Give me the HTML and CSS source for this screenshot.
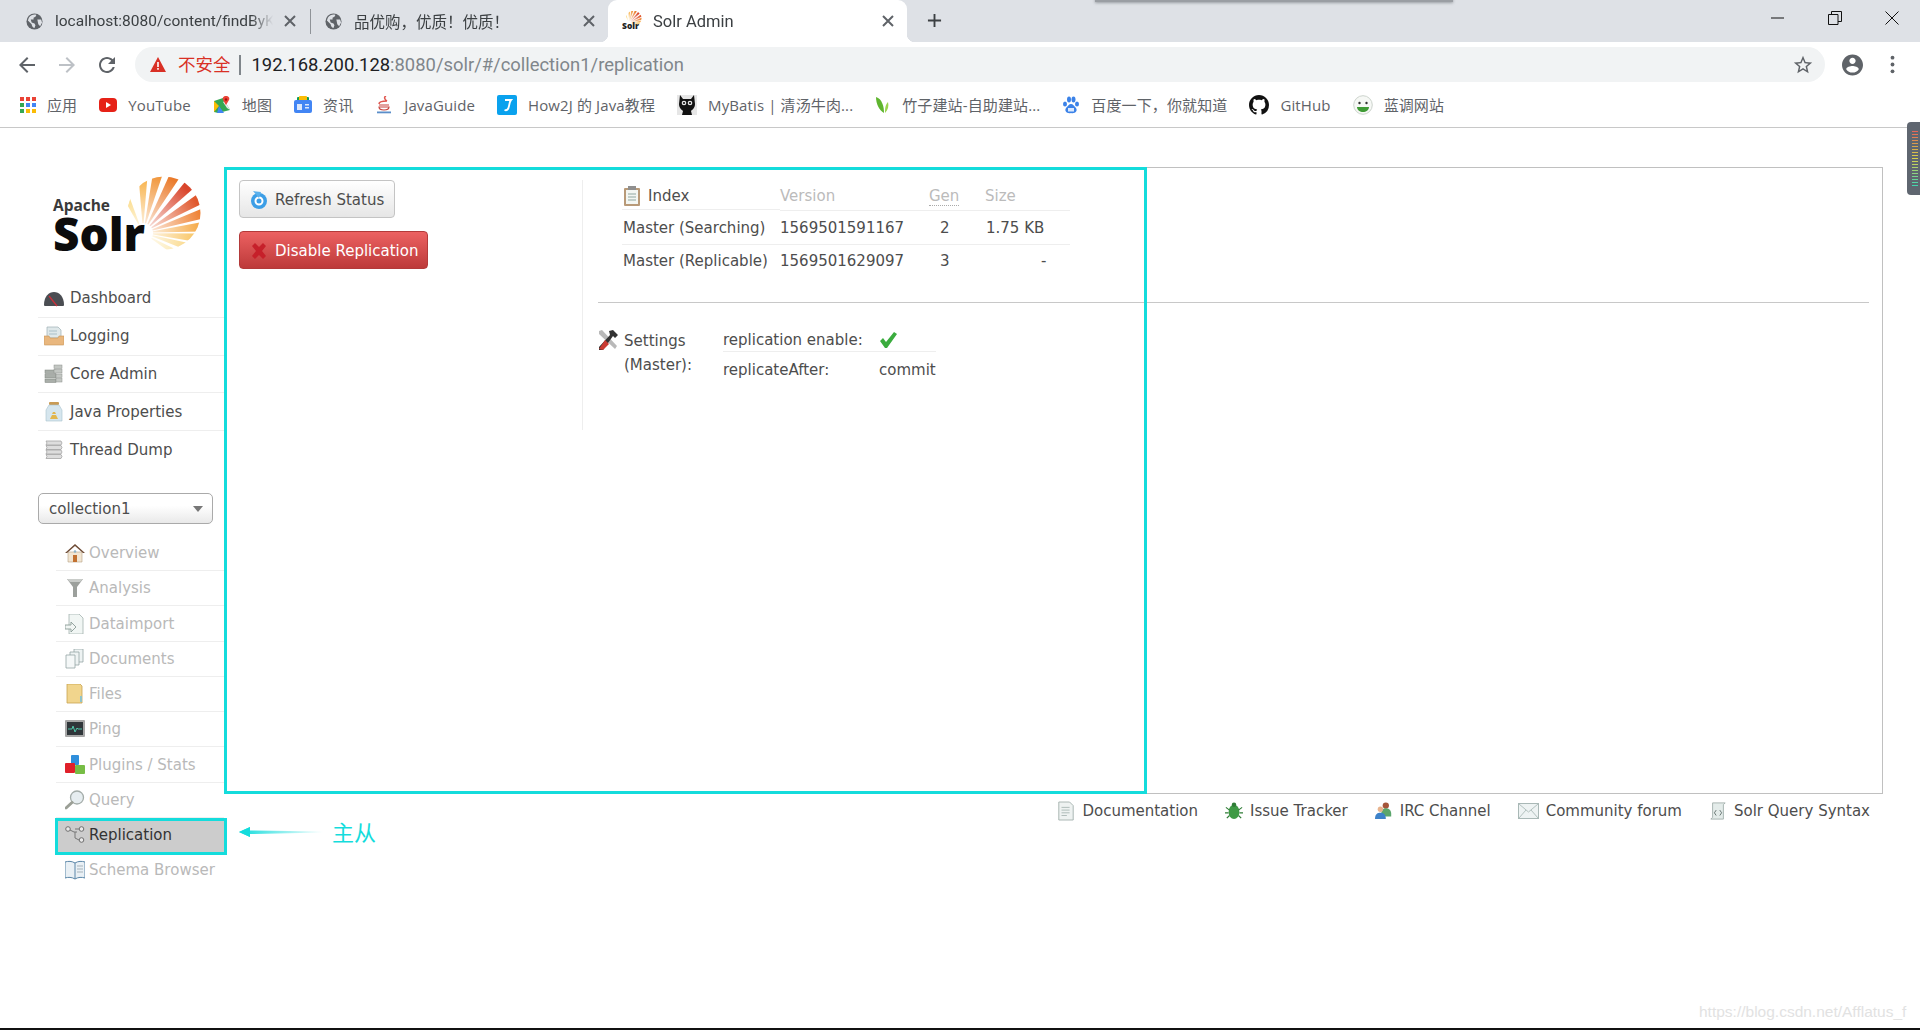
FILE: index.html
```html
<!DOCTYPE html>
<html lang="en">
<head>
<meta charset="utf-8">
<title>Solr Admin</title>
<link rel="stylesheet" href="styles.css">
</head>
<body>
<svg class="sprite" aria-hidden="true">
  <defs>
    <clipPath id="sunclip"><circle cx="21" cy="-20" r="36.5"/></clipPath>
    <radialGradient id="sunfade" gradientUnits="userSpaceOnUse" cx="0" cy="0" r="62">
      <stop offset="0.1" stop-color="#fff" stop-opacity=".85"/>
      <stop offset="1" stop-color="#fff" stop-opacity="0"/>
    </radialGradient>
    <polygon id="ray" points="10,-.6 10,.6 75,6 75,-6"/>
    <linearGradient id="tail" x1="0" x2="1" y1="0" y2="0">
      <stop offset="0" stop-color="#14dcdc"/>
      <stop offset="1" stop-color="#14dcdc" stop-opacity="0"/>
    </linearGradient>
    <symbol id="sun" viewBox="-20 -60 80 80" overflow="visible">
      <g clip-path="url(#sunclip)">
        <use href="#ray" transform="rotate(-115)" fill="#f9c84a"/>
        <use href="#ray" transform="rotate(-90)" fill="#f7a935"/>
        <use href="#ray" transform="rotate(-76)" fill="#f09030"/>
        <use href="#ray" transform="rotate(-61)" fill="#ea7a2a"/>
        <use href="#ray" transform="rotate(-46)" fill="#d9452b"/>
        <use href="#ray" transform="rotate(-31)" fill="#e0572c"/>
        <use href="#ray" transform="rotate(-18)" fill="#ee7f30"/>
        <use href="#ray" transform="rotate(-6)" fill="#f5a43a"/>
        <use href="#ray" transform="rotate(5)" fill="#f8bd4e"/>
        <use href="#ray" transform="rotate(17)" fill="#f9cf6c"/>
        <use href="#ray" transform="rotate(31)" fill="#fbdf8e"/>
        <circle cx="0" cy="0" r="62" fill="url(#sunfade)"/>
      </g>
    </symbol>
    <symbol id="globe" viewBox="0 0 18 18">
      <circle cx="9" cy="9" r="8.5" fill="#5f6368"/>
      <path d="M3 5c2-3 6-4 8-3l-1 2-2 1 0 2-3 0 1 3 3 1 1 2-1 3c-2 0-3-3-3-4L2 8z M12 7l4 0 1 3-2 4-2-2z" fill="#dee1e6"/>
    </symbol>
    <symbol id="x" viewBox="0 0 14 14">
      <path d="M2 2l10 10M12 2L2 12" stroke="#5f6368" stroke-width="2" fill="none"/>
    </symbol>
  </defs>
</svg>

<header class="chrome">
  <div class="tabstrip">
    <div class="tab tab-one">
      <svg class="favicon"><use href="#globe"/></svg>
      <span class="tab-title">localhost:8080/content/findByKey</span>
      <svg class="tab-close"><use href="#x"/></svg>
    </div>
    <span class="tab-sep"></span>
    <div class="tab tab-two">
      <svg class="favicon"><use href="#globe"/></svg>
      <span class="tab-title">品优购，优质！优质！</span>
      <svg class="tab-close"><use href="#x"/></svg>
    </div>
    <div class="tab tab-active">
      <svg class="favicon solr-fav" viewBox="0 0 20 20">
        <use href="#sun" x="3" y="-1" width="17" height="17"/>
        <text x="0" y="18" class="fav-text">Solr</text>
      </svg>
      <span class="tab-title">Solr Admin</span>
      <svg class="tab-close"><use href="#x"/></svg>
    </div>
    <svg class="new-tab" viewBox="0 0 16 16"><path d="M8 1v14M1 8h14" stroke="#3c4043" stroke-width="2"/></svg>
    <div class="window-controls">
      <span class="win-btn"><svg viewBox="0 0 14 14"><path d="M0 7h13" stroke="#111" stroke-width="1"/></svg></span>
      <span class="win-btn"><svg viewBox="0 0 14 14"><path d="M.5 3.500h9.500v10h-9.500zM3.500 3V.5h10v10h-3.500" stroke="#111" stroke-width="1" fill="none"/></svg></span>
      <span class="win-btn"><svg viewBox="0 0 14 14"><path d="M.5.5l13 13M13.500.5l-13 13" stroke="#111" stroke-width="1" fill="none"/></svg></span>
    </div>
  </div>

  <div class="toolbar">
    <span class="nav-btn"><svg viewBox="0 0 24 24"><path fill="#5f6368" d="M20 11H7.830l5.590-5.590L12 4l-8 8 8 8 1.410-1.410L7.830 13H20v-2z"/></svg></span>
    <span class="nav-btn"><svg viewBox="0 0 24 24"><path fill="#bdc1c6" d="M12 4l-1.410 1.410L16.170 11H4v2h12.170l-5.580 5.590L12 20l8-8z"/></svg></span>
    <span class="nav-btn"><svg viewBox="0 0 24 24"><path fill="#5f6368" d="M17.650 6.350C16.200 4.900 14.210 4 12 4c-4.420 0-7.990 3.580-7.990 8s3.570 8 7.990 8c3.730 0 6.840-2.550 7.730-6h-2.080c-.82 2.330-3.040 4-5.650 4-3.310 0-6-2.690-6-6s2.690-6 6-6c1.660 0 3.140.69 4.220 1.780L13 11h7V4l-2.350 2.350z"/></svg></span>
    <div class="omnibox">
      <svg class="warn" viewBox="0 0 16 15"><path fill="#d93025" d="M8 0l8 15H0z"/><path fill="#fff" d="M7.200 5h1.600v5H7.200zM7.200 11h1.600v1.700H7.200z"/></svg>
      <span class="insecure">不安全</span>
      <span class="omni-sep"></span>
      <span class="url"><span class="host">192.168.200.128</span>:8080/solr/#/collection1/replication</span>
      <svg class="star" viewBox="0 0 24 24"><path fill="#5f6368" d="M22 9.240l-7.190-.62L12 2 9.190 8.630 2 9.240l5.460 4.730L5.820 21 12 17.270 18.180 21l-1.630-7.030L22 9.240zM12 15.400l-3.760 2.270 1-4.280-3.320-2.880 4.380-.38L12 6.100l1.710 4.040 4.380.38-3.320 2.880 1 4.280L12 15.400z"/></svg>
    </div>
    <svg class="avatar" viewBox="2 2 20 20"><path fill="#5f6368" d="M12 2C6.480 2 2 6.480 2 12s4.480 10 10 10 10-4.480 10-10S17.520 2 12 2zm0 3c1.660 0 3 1.340 3 3s-1.340 3-3 3-3-1.340-3-3 1.340-3 3-3zm0 14.200c-2.500 0-4.710-1.280-6-3.220.03-1.990 4-3.080 6-3.080 1.990 0 5.970 1.090 6 3.080-1.290 1.940-3.500 3.220-6 3.220z"/></svg>
    <svg class="menu-dots" viewBox="0 0 4 18"><circle cx="2" cy="2.500" r="1.800" fill="#5f6368"/><circle cx="2" cy="9" r="1.800" fill="#5f6368"/><circle cx="2" cy="15.500" r="1.800" fill="#5f6368"/></svg>
  </div>

  <nav class="bookmarks">
    <a class="bm">
      <svg class="bm-ico" viewBox="0 0 16 16"><g>
        <rect x="0" y="0" width="4" height="4" fill="#ea4335"/><rect x="6" y="0" width="4" height="4" fill="#ea4335"/><rect x="12" y="0" width="4" height="4" fill="#ea4335"/>
        <rect x="0" y="6" width="4" height="4" fill="#34a853"/><rect x="6" y="6" width="4" height="4" fill="#4285f4"/><rect x="12" y="6" width="4" height="4" fill="#4285f4"/>
        <rect x="0" y="12" width="4" height="4" fill="#34a853"/><rect x="6" y="12" width="4" height="4" fill="#fbbc05"/><rect x="12" y="12" width="4" height="4" fill="#fbbc05"/></g></svg>
      应用</a>
    <a class="bm">
      <svg class="bm-ico" viewBox="0 0 18 18"><rect x="0" y="2" width="18" height="14" rx="4" fill="#e62117"/><path d="M7 6l5 3-5 3z" fill="#fff"/></svg>
      YouTube</a>
    <a class="bm">
      <svg class="bm-ico" viewBox="0 0 18 18"><path d="M1 5l9-3 7 12-12 3-4-1z" fill="#34a853"/><path d="M1 5l5 5-5 6z" fill="#fbbc05"/><path d="M6 10l5 7H4z" fill="#4285f4"/><path d="M10 6l4 6 3 2-5-9z" fill="#e8eaed"/><path d="M13 0c-2.500 0-4 2-3 4l3 5 3-5c1-2-.5-4-3-4z" fill="#ea4335"/><circle cx="13" cy="3.500" r="1.200" fill="#a50e0e"/></svg>
      地图</a>
    <a class="bm">
      <svg class="bm-ico" viewBox="0 0 18 18"><rect x="3" y="1" width="12" height="6" rx="1" fill="#0f9d58"/><rect x="5" y="0" width="8" height="5" rx="1" fill="#fbbc05"/><rect x="0" y="4" width="18" height="13" rx="2" fill="#4285f4"/><path d="M3 8h5v6H3z M11 8h4v1.500h-4z M11 11h4v1.500h-4z" fill="#dbe7fb"/></svg>
      资讯</a>
    <a class="bm">
      <svg class="bm-ico" viewBox="0 0 18 18"><path d="M4 8c0-3 5-3 8-3M12 5C9 3 9 1 11 0" stroke="#e0574f" stroke-width="1.500" fill="none"/><path d="M4 9h10M4 11h10c0 2-2 3-5 3s-5-1-5-3z" stroke="#c7453f" stroke-width="1.200" fill="none"/><rect x="2" y="15.500" width="14" height="1.800" fill="#5b8ec9"/></svg>
      JavaGuide</a>
    <a class="bm">
      <svg class="bm-ico bm-wide" viewBox="0 0 20 20"><rect width="20" height="20" rx="2" fill="#0aa2ee"/><path d="M8 5h6c-1 1-1.500 3-2 6s-2 5-4.500 4" stroke="#fff" stroke-width="1.800" fill="none"/></svg>
      How2J 的 Java教程</a>
    <a class="bm">
      <svg class="bm-ico bm-wide" viewBox="0 0 20 20"><rect width="20" height="20" fill="#e6e6e6"/><path d="M3 0l3 4h8l3-4 1 9c0 4-3 6-4 7l1 4H5l1-4c-1-1-4-3-4-7z" fill="#111"/><circle cx="7" cy="8" r="2.300" fill="#e8e8e8"/><circle cx="13" cy="8" r="2.300" fill="#e8e8e8"/><circle cx="7" cy="8" r="1.100" fill="#111"/><circle cx="13" cy="8" r="1.100" fill="#111"/></svg>
      MyBatis | 清汤牛肉...</a>
    <a class="bm">
      <svg class="bm-ico bm-bamboo" viewBox="0 0 16 18"><path d="M1 1c6 2 8 9 8 16C4 14 1 8 1 1z" fill="#5fb52f"/><path d="M10 17c0-4 0-8 3-11 1 4 0 8-3 11z" fill="#9ad44e"/></svg>
      竹子建站-自助建站...</a>
    <a class="bm">
      <svg class="bm-ico" viewBox="0 0 18 18"><g fill="#3b82e8"><ellipse cx="3" cy="8" rx="2" ry="2.600"/><ellipse cx="7" cy="3.500" rx="2" ry="3"/><ellipse cx="11.500" cy="3.500" rx="2" ry="3"/><ellipse cx="15" cy="8" rx="2" ry="2.600"/><path d="M9 8c-2 0-3 2-5 4-2 3 1 6 5 5 4 1 7-2 5-5-2-2-3-4-5-4z"/></g><rect x="6" y="12" width="6" height="3.500" fill="#dbe9fd"/></svg>
      百度一下，你就知道</a>
    <a class="bm">
      <svg class="bm-ico bm-wide" viewBox="0 0 16 16"><path fill="#111" d="M8 0C3.580 0 0 3.580 0 8c0 3.540 2.290 6.530 5.470 7.590.4.070.55-.17.55-.38 0-.19-.01-.82-.01-1.490-2.010.37-2.530-.49-2.690-.94-.09-.23-.48-.94-.82-1.130-.28-.15-.68-.52-.01-.53.63-.01 1.080.58 1.230.82.72 1.210 1.870.87 2.330.66.07-.52.28-.87.51-1.070-1.780-.2-3.640-.89-3.640-3.950 0-.87.31-1.590.82-2.150-.08-.2-.36-1.020.08-2.120 0 0 .67-.21 2.200.82.64-.18 1.320-.27 2-.27.68 0 1.360.09 2 .27 1.530-1.040 2.200-.82 2.200-.82.44 1.100.16 1.920.08 2.120.51.56.82 1.270.82 2.150 0 3.070-1.870 3.750-3.650 3.950.29.25.54.73.54 1.480 0 1.070-.01 1.930-.01 2.200 0 .21.15.46.55.38A8.013 8.013 0 0016 8c0-4.420-3.580-8-8-8z"/></svg>
      GitHub</a>
    <a class="bm">
      <svg class="bm-ico bm-wide" viewBox="0 0 20 20"><circle cx="10" cy="10" r="9.300" fill="#f6f8f5" stroke="#ccd3cc"/><circle cx="6.500" cy="8" r="1.200" fill="#333"/><circle cx="13.500" cy="8" r="1.200" fill="#333"/><path d="M4 12h12c0 3-3 5-6 5s-6-2-6-5z" fill="#3f9b35"/></svg>
      蓝调网站</a>
  </nav>
</header>

<main class="page">
  <aside class="sidebar">
    <svg class="logo" viewBox="0 0 155 90">
      <use href="#sun" x="73" y="3" width="80" height="80"/>
      <text x="3" y="41" class="logo-apache" textLength="57" lengthAdjust="spacingAndGlyphs">Apache</text>
      <text x="3" y="81" class="logo-solr" textLength="92" lengthAdjust="spacingAndGlyphs">Solr</text>
    </svg>

    <ul class="menu">
      <li class="menu-row"><svg class="ico" viewBox="0 0 20 20"><path d="M0 17C0 8 5 4 10 4s10 4 10 13c0 1-1 1-2 1H2c-1 0-2 0-2-1z" fill="#4a4d52"/><path d="M5 8l8 10" stroke="#c9303a" stroke-width="1.300"/></svg>Dashboard</li>
      <li class="menu-row"><svg class="ico" viewBox="0 0 20 20"><path d="M3 1h11l3 3v8H3z" fill="#dfe8ea" stroke="#9eb0b4" stroke-width=".7"/><path d="M5 5h8M5 8h8" stroke="#a9c0c8"/><path d="M0 10h5l1 2h8l1-2h5v8c0 1-1 1-1 1H1s-1 0-1-1z" fill="#e9b77e" stroke="#c79557" stroke-width=".6"/></svg>Logging</li>
      <li class="menu-row"><svg class="ico" viewBox="0 0 20 20"><g fill="#a9aea9" stroke="#7d827d" stroke-width=".5"><rect x="1" y="6" width="11" height="3.500"/><rect x="1" y="10.500" width="11" height="3.500"/><rect x="1" y="15" width="11" height="3.500"/></g><g fill="#c3c7c3" stroke="#8c908c" stroke-width=".5"><rect x="10" y="1" width="8" height="3.500"/><rect x="10" y="5.500" width="8" height="3.500"/><rect x="12" y="10" width="6" height="3.500"/><rect x="12" y="14.500" width="6" height="3.500"/></g></svg>Core Admin</li>
      <li class="menu-row"><svg class="ico" viewBox="0 0 20 20"><rect x="5" y="0" width="10" height="3" rx="1" fill="#c99b55"/><path d="M5 3h10l3 5v11H2V8z" fill="#d6e6ee" stroke="#a9c3cf" stroke-width=".6"/><path d="M6 17l2-4h4l2 4zM8 12l1-2h2l1 2z" fill="#e2b64d"/></svg>Java Properties</li>
      <li class="menu-row"><svg class="ico" viewBox="0 0 20 20"><g fill="#dddddd" stroke="#a4a4a4" stroke-width=".8"><path d="M2 1h15l1 2-1 2H2l1-2z"/><path d="M2 5.500h15l1 2-1 2H2l1-2z"/><path d="M2 10h15l1 2-1 2H2l1-2z"/><path d="M2 14.500h15l1 2-1 2H2l1-2z"/></g></svg>Thread Dump</li>
    </ul>

    <div class="core-select"><span>collection1</span><i class="caret"></i></div>

    <ul class="menu core-menu">
      <li class="menu-row core-row"><svg class="ico" viewBox="0 0 20 20"><path d="M3 9h14v10H3z" fill="#f2e6d3" stroke="#b6a184" stroke-width=".6"/><path d="M0 10L10 1l10 9-2 0-8-7-8 7z" fill="#6e4b35"/><rect x="8" y="12" width="4" height="7" fill="#c2702f"/><circle cx="10" cy="8.500" r="1.300" fill="#8fb4c8"/></svg>Overview</li>
      <li class="menu-row core-row"><svg class="ico" viewBox="0 0 20 20"><path d="M2 1h16l-6 8v10H8V9z" fill="#9ca09c"/><path d="M2 1h16l-3 3H5z" fill="#c9ccc9"/></svg>Analysis</li>
      <li class="menu-row core-row"><svg class="ico" viewBox="0 0 20 20"><path d="M4 0h10l4 4v16H4z" fill="#f1f6f4" stroke="#a3b3ae" stroke-width=".8"/><path d="M0 11h6V8l5 5-5 5v-3H0z" fill="#f2f6f4" stroke="#8a9c96" stroke-width=".9"/></svg>Dataimport</li>
      <li class="menu-row core-row"><svg class="ico" viewBox="0 0 20 20"><path d="M9 0h9v13H9z" fill="#eef3f3" stroke="#95a5a5" stroke-width=".8"/><path d="M5 3h9v13H5z" fill="#eef3f3" stroke="#95a5a5" stroke-width=".8"/><path d="M1 6h9v13H1z" fill="#f5f8f8" stroke="#95a5a5" stroke-width=".8"/></svg>Documents</li>
      <li class="menu-row core-row"><svg class="ico" viewBox="0 0 20 20"><path d="M2 0h13l2 2v17H2z" fill="#f1d58d" stroke="#c9a351" stroke-width=".8"/><path d="M15 12h2v6h-2z" fill="#8fc3c9"/></svg>Files</li>
      <li class="menu-row core-row"><svg class="ico" viewBox="0 0 20 20"><rect x="0" y="1" width="20" height="17" rx="1" fill="#a7a7a7"/><rect x="2" y="3" width="16" height="13" fill="#30363a"/><path d="M3 10h4l1-3 2 6 2-4 1 1h4" stroke="#4fc4a8" fill="none"/></svg>Ping</li>
      <li class="menu-row core-row"><svg class="ico" viewBox="0 0 20 20"><rect x="6" y="0" width="8" height="10" rx="1" fill="#2f8fdc"/><rect x="0" y="8" width="10" height="10" rx="1" fill="#e0202a"/><rect x="10" y="10" width="10" height="9" rx="1" fill="#77bd45"/></svg>Plugins / Stats</li>
      <li class="menu-row core-row"><svg class="ico" viewBox="0 0 20 20"><circle cx="12" cy="7.500" r="6.500" fill="#e6edf0" stroke="#a3aca9" stroke-width="1.300"/><path d="M7 12.500L1 18" stroke="#9b9f96" stroke-width="3" stroke-linecap="round"/></svg>Query</li>
      <li class="menu-row core-row core-active"><svg class="ico" viewBox="0 0 20 20"><g fill="#e9e9e9" stroke="#6f6f6f"><circle cx="3" cy="4" r="2.300"/><circle cx="16.500" cy="4" r="2.300"/><circle cx="16.500" cy="15" r="2.300"/></g><path d="M5 5l4 2h3M10 7v6l4 2M14 4h-4" stroke="#777" fill="none"/></svg>Replication</li>
      <li class="menu-row core-row core-last"><svg class="ico" viewBox="0 0 20 20"><path d="M0 2c3-1 7-1 10 1 3-2 7-2 10-1v16c-3-1-7-1-10 1-3-2-7-2-10-1z" fill="#e9f0f5" stroke="#5a86a8"/><path d="M10 3v16" stroke="#5a86a8"/><path d="M12 6h6M12 9h6M12 12h6" stroke="#a7b3ba"/></svg>Schema Browser</li>
    </ul>
  </aside>

  <section class="main-col">
    <div class="content">
      <div class="actions">
        <button class="btn btn-plain"><svg class="btn-ico" viewBox="0 0 18 18"><circle cx="9" cy="10" r="8" fill="#3c9ee6"/><circle cx="9" cy="10" r="3.500" fill="none" stroke="#fff" stroke-width="2"/><path d="M3 0l8 1-2 6z" fill="#5ab0ec"/></svg>Refresh Status</button>
        <button class="btn btn-danger"><svg class="btn-ico" viewBox="0 0 18 18"><path d="M2 4l3-3 4 4 4-4 3 3-4 5 4 5-3 3-4-4-4 4-3-3 4-5z" fill="#c6202a"/></svg>Disable Replication</button>
      </div>
      <div class="details">
        <table class="index-table">
          <colgroup><col class="c-name"><col class="c-ver"><col class="c-gen"><col class="c-size"></colgroup>
          <thead>
            <tr>
              <th class="th-index"><svg class="ico" viewBox="0 0 20 20"><rect x="2" y="2" width="16" height="18" rx="1" fill="#b89a78"/><rect x="4" y="4" width="12" height="14" fill="#f3f6f2"/><rect x="6" y="0" width="8" height="4" fill="#8f8f8f"/><path d="M6 8h8M6 11h8M6 14h8" stroke="#8fa7a0"/></svg>Index</th>
              <th>Version</th>
              <th><abbr class="gen">Gen</abbr></th>
              <th>Size</th>
            </tr>
          </thead>
          <tbody>
            <tr class="row-first"><td class="td-name">Master (Searching)</td><td>1569501591167</td><td class="td-gen">2</td><td class="td-size">1.75 KB</td></tr>
            <tr><td class="td-name">Master (Replicable)</td><td>1569501629097</td><td class="td-gen">3</td><td class="td-size td-dash">-</td></tr>
          </tbody>
        </table>
        <hr class="rule">
        <div class="settings">
          <svg class="tool-ico" viewBox="0 0 20 20"><path d="M1 1l3-1 15 16-2 3L1 4z" fill="#b9b9b9"/><path d="M11 1l4-1 5 5-3 3-2-2-10 14H1v-3L12 5z" fill="#333"/><path d="M1 19l6-9 4 4-6 6z" fill="#c93a32"/></svg>
          <div class="settings-label">Settings (Master):</div>
          <div class="settings-list">
            <div class="set-row set-first"><span class="set-key">replication enable:</span><svg class="check" viewBox="0 0 18 18"><path d="M1 10l3-3 3 4 8-10 3 2-10 14h-2z" fill="#3aac3e"/></svg></div>
            <div class="set-row"><span class="set-key">replicateAfter:</span><span>commit</span></div>
          </div>
        </div>
      </div>
    </div>
    <footer class="links">
      <a class="link"><svg class="ico" viewBox="0 0 20 20"><path d="M2 0h12l4 4v16H2z" fill="#eef2f1" stroke="#a3b0ad"/><path d="M5 6h9M5 9h9M5 12h9M5 15h6" stroke="#a9b7b4"/></svg>Documentation</a>
      <a class="link"><svg class="ico" viewBox="0 0 20 20"><ellipse cx="10" cy="11" rx="6" ry="8" fill="#3f9a45"/><circle cx="10" cy="3" r="2.500" fill="#2f7c36"/><path d="M1 6l4 3M19 6l-4 3M0 12h4M20 12h-4M2 18l3-3M18 18l-3-3" stroke="#2f7c36" stroke-width="1.300"/></svg>Issue Tracker</a>
      <a class="link"><svg class="ico" viewBox="0 0 20 20"><circle cx="12" cy="4" r="3.500" fill="#a5553a"/><path d="M7 13c0-5 3-6 5-6s6 1 6 6v3H7z" fill="#5ba66c"/><circle cx="6" cy="8" r="3" fill="#e8b48e"/><path d="M0 19c0-6 3-7 6-7s6 1 6 7z" fill="#3d82c9"/></svg>IRC Channel</a>
      <a class="link"><svg class="ico mail" viewBox="0 0 21 18"><rect x=".5" y="1.500" width="20" height="15" fill="#eef3f3" stroke="#a9b8b6"/><path d="M1 2l9.500 8L20 2M1 16l7-8M20 16l-7-8" stroke="#b3c1bf" fill="none"/></svg>Community forum</a>
      <a class="link"><svg class="ico" viewBox="0 0 20 20"><path d="M4 1h14l-2 2v16H2l2-2z" fill="#e4ecea" stroke="#a1afac"/><path d="M8 9l-2 3 2 3M12 9l2 3-2 3" stroke="#5f6c6a" fill="none"/></svg>Solr Query Syntax</a>
    </footer>
  </section>
</main>

<div class="annot-box"></div>
<svg class="annot-arrow" viewBox="0 0 84 12"><path d="M0 6l11-5v3.500L84 5.500v1L11 8v3z" fill="url(#tail)"/><path d="M0 6l11-5v10z" fill="#14dcdc"/></svg>
<span class="annot-text">主从</span>
<span class="top-shadow"></span>
<div class="side-widget"><i></i></div>
<span class="watermark">https://blog.csdn.net/Afflatus_f</span>
</body>
</html>
```
FILE: styles.css
```css
* { box-sizing: border-box; }
html, body { margin: 0; padding: 0; }
body {
  position: relative;
  width: 1920px;
  height: 1030px;
  overflow: hidden;
  background: #fff;
  color: #4d4d4d;
  font-family: "DejaVu Sans", Verdana, sans-serif;
  font-size: 15px;
  border-bottom: 2px solid #111;
}
.sprite { position: absolute; width: 0; height: 0; }

/* browser chrome */
.chrome { font-family: "Roboto", "Noto Sans CJK SC", sans-serif; }
.tabstrip { display: flex; height: 42px; background: #dee1e6; align-items: stretch; }
.tab { display: flex; align-items: center; font-size: 15.5px; color: #3c4043; }
.tab-one { width: 310px; padding: 0 13px 0 26px; }
.tab-two { width: 297px; padding: 0 12px 0 14px; }
.tab-active {
  position: relative;
  width: 299px;
  padding: 0 12px 0 14px;
  background: #fff;
  border-radius: 9px 9px 0 0;
}
.tab-active::before, .tab-active::after {
  content: "";
  position: absolute;
  bottom: 0;
  width: 8px;
  height: 8px;
}
.tab-active::before { left: -8px; background: radial-gradient(circle at 0 0, transparent 8px, #fff 8.5px); }
.tab-active::after { right: -8px; background: radial-gradient(circle at 100% 0, transparent 8px, #fff 8.5px); }
.favicon { width: 17px; height: 17px; flex: none; }
.solr-fav { width: 20px; height: 20px; margin-right: -1px; }
.fav-text { font: 800 8.5px "Open Sans", sans-serif; fill: #222; }
.tab-title {
  flex: 1;
  margin-left: 12px;
  min-width: 0;
  overflow: hidden;
  white-space: nowrap;
  -webkit-mask-image: linear-gradient(90deg, #000 90%, transparent 100%);
  mask-image: linear-gradient(90deg, #000 90%, transparent 100%);
}
.tab-two .tab-title { font-family: "Noto Sans CJK SC", "Roboto", sans-serif; font-size: 15.5px; }
.tab-active .tab-title { font-family: "Roboto", sans-serif; font-size: 16.5px; }
.tab-close { width: 14px; height: 14px; flex: none; margin-left: 10px; }
.tab-sep { width: 1px; height: 25px; margin-top: 9px; background: #8f9398; }
.new-tab { width: 15px; height: 15px; margin: 13px 0 0 20px; }
.window-controls { display: flex; margin-left: auto; }
.win-btn { width: 57px; display: flex; justify-content: center; padding-top: 11px; }
.win-btn svg { width: 14px; height: 14px; }

.toolbar { display: flex; align-items: center; height: 42px; padding: 5px 0 2px 7px; background: #fff; }
.nav-btn { width: 40px; height: 30px; display: flex; align-items: center; justify-content: center; }
.nav-btn svg { width: 24px; height: 24px; }
.omnibox {
  flex: 1;
  height: 35px;
  margin-left: 8px;
  padding: 0 11px 0 15px;
  display: flex;
  align-items: center;
  background: #f1f3f4;
  border-radius: 18px;
}
.warn { width: 16px; height: 15px; }
.insecure { margin: -2px 0 0 12px; font: 17.5px "Noto Sans CJK SC", sans-serif; color: #d93025; }
.omni-sep { width: 2px; height: 20px; margin: 0 11px 0 8px; background: #80868b; }
.url { font-size: 18.4px; color: #80868b; }
.host { color: #202124; }
.star { width: 22px; height: 22px; margin-left: auto; }
.avatar { width: 21px; height: 22px; margin-left: 17px; }
.menu-dots { width: 5px; height: 19px; margin: 0 25px 0 27px; }

.bookmarks {
  display: flex;
  align-items: center;
  height: 44px;
  padding: 0 0 2px 20px;
  gap: 22px;
  background: #fff;
  border-bottom: 1px solid #c8c8c8;
  font-family: "Open Sans", "Noto Sans CJK SC", sans-serif;
  font-size: 15px;
  letter-spacing: .12px;
  color: #5f6368;
}
.bm { display: flex; align-items: center; gap: 11px; white-space: nowrap; }
.bm-ico { width: 18px; height: 18px; flex: none; }
.bm-bamboo { width: 16px; }
.bm-wide { width: 20px; height: 20px; }
.bm:first-child .bm-ico { width: 16px; height: 16px; }

/* solr page */
.page { display: grid; grid-template-columns: 224px 1fr; padding-right: 37px; }
.sidebar { padding: 0 0 0 38px; }
.logo { display: block; width: 155px; height: 90px; margin: 42px 0 20px 12px; overflow: visible; }
.logo-apache { font: 700 15.5px "Open Sans", sans-serif; fill: #3a3a3a; }
.logo-solr { font: 800 46px "Open Sans", sans-serif; fill: #0c0c0c; }
.menu { list-style: none; margin: 0; padding: 0; }
.menu-row {
  display: flex;
  align-items: center;
  gap: 6px;
  height: 37.8px;
  padding-left: 6px;
  border-bottom: 1px solid #eee;
  color: #4d4d4d;
}
.menu-row:last-child { border-bottom: 0; }
.ico { width: 20px; height: 20px; flex: none; }
.core-select {
  display: flex;
  align-items: center;
  justify-content: space-between;
  width: 175px;
  height: 31px;
  margin-top: 24px;
  padding: 1px 9px 0 10px;
  border: 1px solid #aaa;
  border-radius: 5px;
  background: linear-gradient(#fff 40%, #e9e9e9);
}
.caret { width: 0; height: 0; border: 5px solid transparent; border-top: 6px solid #777; border-bottom: 0; }
.core-menu { margin: 12px 0 0 18px; }
.core-row { height: 35.25px; padding-left: 9px; gap: 4px; color: #b9b9b9; }
.core-active {
  position: relative;
  height: 37px;
  padding-bottom: 2px;
  background: #ccc;
  color: #333;
  border-bottom: 0;
}
.core-active::after {
  content: "";
  position: absolute;
  inset: 0 -3px 0 -1px;
  border: 3px solid #14dcdc;
}
.core-last { height: 30px; }

.main-col { padding-top: 39px; }
.content {
  display: grid;
  grid-template-columns: 358px 1fr;
  height: 627px;
  padding-top: 12px;
  border: 1px solid #c0c0c0;
}
.actions {
  display: flex;
  flex-direction: column;
  align-items: flex-start;
  gap: 13px;
  height: 250px;
  padding-left: 14px;
  border-right: 1px solid #eee;
}
.btn {
  display: flex;
  align-items: center;
  gap: 7px;
  height: 38px;
  padding: 1px 10px 0;
  border-radius: 4px;
  font: inherit;
}
.btn-plain { border: 1px solid #c4c4c4; background: linear-gradient(#fff, #e6e6e6); color: #4d4d4d; }
.btn-danger { padding-right: 9px; border: 1px solid #b33a3a; background: linear-gradient(#ec6161, #bd3a3a); color: #fff; }
.btn-ico { width: 18px; height: 18px; flex: none; }
.details { padding: 0 13px 0 15px; }
.index-table { width: 448px; margin-left: 24px; border-collapse: collapse; table-layout: fixed; }
.c-name { width: 158px; }
.c-ver { width: 149px; }
.c-gen { width: 56px; }
.c-size { width: 85px; }
.index-table th {
  height: 30px;
  padding: 2px 0 0;
  text-align: left;
  font-weight: 400;
  color: #bbb;
  border-bottom: 1px solid #eee;
}
.index-table .th-index { display: flex; align-items: center; gap: 6px; color: #4d4d4d; }
.gen { border-bottom: 1px dotted #aaa; }
.index-table td { height: 33px; padding: 0; border-bottom: 1px solid #eee; white-space: nowrap; }
.row-first td { height: 34px; padding-top: 2px; }
.index-table tbody tr:last-child td { border-bottom: 0; }
.index-table .td-name { padding-left: 1px; }
.index-table .td-gen { padding-left: 11px; }
.index-table .td-size { padding-left: 1px; }
.index-table .td-dash { padding-left: 56px; }
.rule { height: 1px; margin: 25px 0 26px; border: 0; background: #c8c8c8; }
.settings { display: flex; }
.tool-ico { width: 20px; height: 20px; flex: none; margin-top: 1px; }
.settings-label { width: 98px; margin-left: 6px; line-height: 24px; }
.settings-list { width: 213px; margin-left: 1px; }
.set-row { display: flex; align-items: center; height: 35px; }
.set-first { height: 23px; border-bottom: 1px solid #eee; }
.set-key { width: 156px; flex: none; }
.check { width: 18px; height: 18px; }

.links { display: flex; justify-content: flex-end; gap: 27px; height: 34px; padding-right: 13px; align-items: center; }
.link { display: flex; align-items: center; gap: 7px; }
.link .ico { width: 18px; height: 20px; }
.link .mail { width: 21px; height: 18px; }

/* annotations drawn on top of the page */
.annot-box {
  position: absolute;
  left: 224px;
  top: 167px;
  width: 923px;
  height: 627px;
  border: 3px solid #14dcdc;
}
.annot-arrow { position: absolute; left: 239px; top: 826px; width: 84px; height: 12px; }
.annot-text {
  position: absolute;
  left: 332px;
  top: 815px;
  font: 22px/32px "Noto Sans CJK SC", sans-serif;
  color: #14dcdc;
}
.top-shadow {
  position: absolute;
  left: 1095px;
  top: -3px;
  width: 358px;
  height: 5px;
  background: #9a9ea3;
  box-shadow: 0 1px 3px #9a9ea3;
}
.side-widget {
  position: absolute;
  left: 1907px;
  top: 122px;
  width: 13px;
  height: 73px;
  padding: 9px 0 0 5px;
  background: #5f6670;
  border-radius: 4px 0 0 4px;
}
.side-widget i {
  display: block;
  width: 6px;
  height: 55px;
  background: repeating-linear-gradient(transparent 0 1.5px, #5f6670 1.5px 3px), linear-gradient(#e8635a, #d8a04c 25%, #d8d24a 50%, #94d47c 75%, #3fd6b0);
}
.watermark {
  position: absolute;
  left: 1699px;
  top: 1003px;
  font: 15.5px/18px "Liberation Sans", sans-serif;
  color: #e2e2e2;
  white-space: nowrap;
}
```
